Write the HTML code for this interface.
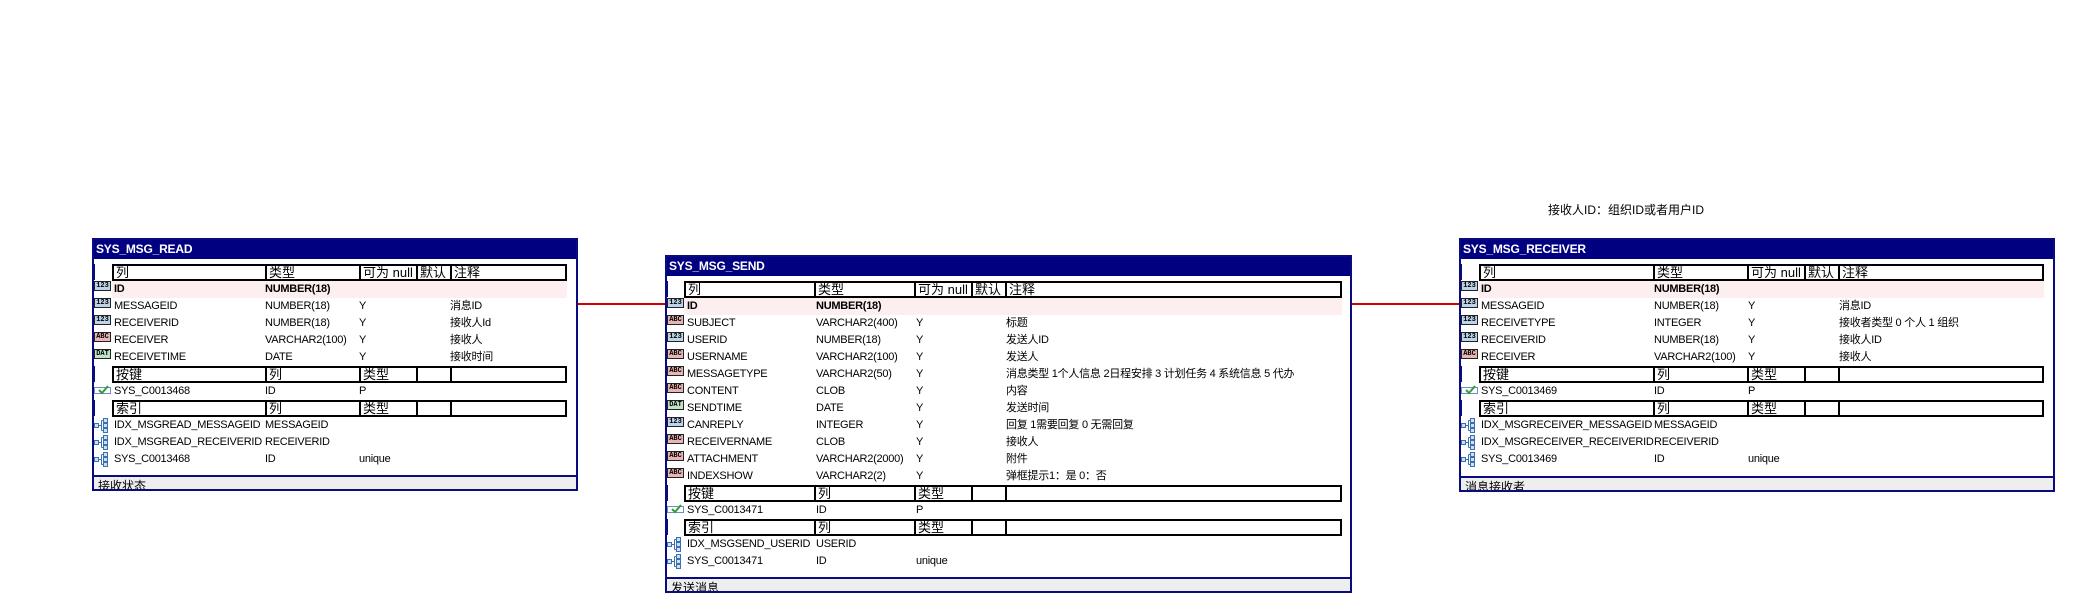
<!DOCTYPE html>
<html><head><meta charset="utf-8"><style>
body{margin:0;width:2079px;height:606px;background:#fff;position:relative;overflow:hidden;font-family:"Liberation Sans","Noto Sans CJK SC",sans-serif;color:#000}
.t{position:absolute;background:#fff}
.b{position:absolute;left:0;top:0;right:0;bottom:0;border:2px solid #0b0b80;z-index:5;pointer-events:none}
.tt{position:absolute;left:0;top:0;right:0;height:21px;background:#000080;color:#fff;font-weight:bold;font-size:12px;line-height:22px;padding-left:4px;letter-spacing:-0.2px}
.r{position:absolute;height:17px;left:0;right:0;font-size:11px;line-height:17px;letter-spacing:-0.25px}
.r span{position:absolute;top:0;white-space:nowrap}
.pk{background:#fdefef}
.pk span{font-weight:bold}
.h{position:absolute;height:17px;border:2px solid #000;box-sizing:border-box;font-size:13px;line-height:13px}
.h i{position:absolute;top:0;bottom:0;border-left:2px solid #000;font-style:normal}
.h s{position:absolute;top:0;text-decoration:none;white-space:nowrap}
.ft{position:absolute;left:0;right:0;bottom:0;height:16px;background:#eeeeee;border-top:2px solid #0b0b80;font-size:12px;line-height:18px;padding-left:6px;box-sizing:border-box;overflow:hidden}
.bar{position:absolute;left:0;width:3px;height:16px;background:#0b0b80}
.ic{position:absolute;left:2px;top:3px;width:15px;height:8px;border:1px solid #222;font-size:7px;line-height:8px;text-align:center;font-weight:bold;letter-spacing:0;font-family:"Liberation Mono",monospace}
.n{background:#bcd3ea}.a{background:#e9b4b4}.d{background:#bfe3c3}
.sv{position:absolute;left:2px;top:1px}
.red{position:absolute;height:2px;background:#d00000}
</style></head><body>

<div class="red" style="left:578px;top:303px;width:87px"></div>
<div class="red" style="left:1352px;top:303px;width:107px"></div>
<div style="position:absolute;left:1548px;top:201px;font-size:12px;white-space:nowrap">接收人ID：组织ID或者用户ID</div>

<!-- TABLE 1 -->
<div class="t" style="left:92px;top:238px;width:486px;height:253px">
<div class="b"></div>
<div class="tt">SYS_MSG_READ</div>
<div class="bar" style="top:26px"></div>
<div class="h" style="left:20px;top:26px;width:455px"><s style="left:2px">列</s><i style="left:151px"><s style="left:2px">类型</s></i><i style="left:245px"><s style="left:2px">可为 null</s></i><i style="left:302px"><s style="left:2px">默认</s></i><i style="left:336px"><s style="left:2px">注释</s></i></div>
<div class="r pk" style="top:43px;right:11px;left:20px"><span class="ic n" style="left:-18px">123</span><span style="left:2px">ID</span><span style="left:153px">NUMBER(18)</span></div>
<div class="r" style="top:60px"><span class="ic n">123</span><span style="left:22px">MESSAGEID</span><span style="left:173px">NUMBER(18)</span><span style="left:267px">Y</span><span style="left:358px">消息ID</span></div>
<div class="r" style="top:77px"><span class="ic n">123</span><span style="left:22px">RECEIVERID</span><span style="left:173px">NUMBER(18)</span><span style="left:267px">Y</span><span style="left:358px">接收人Id</span></div>
<div class="r" style="top:94px"><span class="ic a">ABC</span><span style="left:22px">RECEIVER</span><span style="left:173px">VARCHAR2(100)</span><span style="left:267px">Y</span><span style="left:358px">接收人</span></div>
<div class="r" style="top:111px"><span class="ic d">DAT</span><span style="left:22px">RECEIVETIME</span><span style="left:173px">DATE</span><span style="left:267px">Y</span><span style="left:358px">接收时间</span></div>
<div class="bar" style="top:128px"></div>
<div class="h" style="left:20px;top:128px;width:455px"><s style="left:2px">按键</s><i style="left:151px"><s style="left:2px">列</s></i><i style="left:245px"><s style="left:2px">类型</s></i><i style="left:302px"></i><i style="left:336px"></i></div>
<div class="r" style="top:145px"><svg class="sv" width="18" height="12"><rect x="0.5" y="3.5" width="16" height="6" fill="none" stroke="#6a8fc0"/><path d="M5 6l3 3 6-7" stroke="#3a9a3a" stroke-width="2" fill="none"/></svg><span style="left:22px">SYS_C0013468</span><span style="left:173px">ID</span><span style="left:267px">P</span></div>
<div class="bar" style="top:162px"></div>
<div class="h" style="left:20px;top:162px;width:455px"><s style="left:2px">索引</s><i style="left:151px"><s style="left:2px">列</s></i><i style="left:245px"><s style="left:2px">类型</s></i><i style="left:302px"></i><i style="left:336px"></i></div>
<div class="r" style="top:179px"><svg class="sv" width="16" height="16"><g fill="#cfe0f4" stroke="#3a6fb0"><rect x="0.5" y="5.5" width="4" height="4"/><rect x="9.5" y="0.5" width="4" height="4"/><rect x="9.5" y="5.5" width="4" height="4"/><rect x="9.5" y="10.5" width="4" height="4"/></g><path d="M4.5 7.5h3M7.5 2.5v10M7.5 2.5h2M7.5 12.5h2" stroke="#3a6fb0" fill="none"/></svg><span style="left:22px">IDX_MSGREAD_MESSAGEID</span><span style="left:173px">MESSAGEID</span></div>
<div class="r" style="top:196px"><svg class="sv" width="16" height="16"><g fill="#cfe0f4" stroke="#3a6fb0"><rect x="0.5" y="5.5" width="4" height="4"/><rect x="9.5" y="0.5" width="4" height="4"/><rect x="9.5" y="5.5" width="4" height="4"/><rect x="9.5" y="10.5" width="4" height="4"/></g><path d="M4.5 7.5h3M7.5 2.5v10M7.5 2.5h2M7.5 12.5h2" stroke="#3a6fb0" fill="none"/></svg><span style="left:22px">IDX_MSGREAD_RECEIVERID</span><span style="left:173px">RECEIVERID</span></div>
<div class="r" style="top:213px"><svg class="sv" width="16" height="16"><g fill="#cfe0f4" stroke="#3a6fb0"><rect x="0.5" y="5.5" width="4" height="4"/><rect x="9.5" y="0.5" width="4" height="4"/><rect x="9.5" y="5.5" width="4" height="4"/><rect x="9.5" y="10.5" width="4" height="4"/></g><path d="M4.5 7.5h3M7.5 2.5v10M7.5 2.5h2M7.5 12.5h2" stroke="#3a6fb0" fill="none"/></svg><span style="left:22px">SYS_C0013468</span><span style="left:173px">ID</span><span style="left:267px">unique</span></div>
<div class="ft">接收状态</div>
</div>

<!-- TABLE 2 -->
<div class="t" style="left:665px;top:255px;width:687px;height:338px">
<div class="b"></div>
<div class="tt">SYS_MSG_SEND</div>
<div class="bar" style="top:26px"></div>
<div class="h" style="left:19px;top:26px;width:658px"><s style="left:2px">列</s><i style="left:128px"><s style="left:2px">类型</s></i><i style="left:228px"><s style="left:2px">可为 null</s></i><i style="left:285px"><s style="left:2px">默认</s></i><i style="left:319px"><s style="left:2px">注释</s></i></div>
<div class="r pk" style="top:43px;right:10px;left:19px"><span class="ic n" style="left:-17px">123</span><span style="left:3px">ID</span><span style="left:132px">NUMBER(18)</span></div>
<div class="r" style="top:60px"><span class="ic a">ABC</span><span style="left:22px">SUBJECT</span><span style="left:151px">VARCHAR2(400)</span><span style="left:251px">Y</span><span style="left:341px">标题</span></div>
<div class="r" style="top:77px"><span class="ic n">123</span><span style="left:22px">USERID</span><span style="left:151px">NUMBER(18)</span><span style="left:251px">Y</span><span style="left:341px">发送人ID</span></div>
<div class="r" style="top:94px"><span class="ic a">ABC</span><span style="left:22px">USERNAME</span><span style="left:151px">VARCHAR2(100)</span><span style="left:251px">Y</span><span style="left:341px">发送人</span></div>
<div class="r" style="top:111px;overflow:hidden;right:10px"><span class="ic a">ABC</span><span style="left:22px">MESSAGETYPE</span><span style="left:151px">VARCHAR2(50)</span><span style="left:251px">Y</span><span style="left:341px">消息类型 1个人信息 2日程安排 3 计划任务 4 系统信息 5 代办</span></div>
<div class="r" style="top:128px"><span class="ic a">ABC</span><span style="left:22px">CONTENT</span><span style="left:151px">CLOB</span><span style="left:251px">Y</span><span style="left:341px">内容</span></div>
<div class="r" style="top:145px"><span class="ic d">DAT</span><span style="left:22px">SENDTIME</span><span style="left:151px">DATE</span><span style="left:251px">Y</span><span style="left:341px">发送时间</span></div>
<div class="r" style="top:162px"><span class="ic n">123</span><span style="left:22px">CANREPLY</span><span style="left:151px">INTEGER</span><span style="left:251px">Y</span><span style="left:341px">回复 1需要回复 0 无需回复</span></div>
<div class="r" style="top:179px"><span class="ic a">ABC</span><span style="left:22px">RECEIVERNAME</span><span style="left:151px">CLOB</span><span style="left:251px">Y</span><span style="left:341px">接收人</span></div>
<div class="r" style="top:196px"><span class="ic a">ABC</span><span style="left:22px">ATTACHMENT</span><span style="left:151px">VARCHAR2(2000)</span><span style="left:251px">Y</span><span style="left:341px">附件</span></div>
<div class="r" style="top:213px"><span class="ic a">ABC</span><span style="left:22px">INDEXSHOW</span><span style="left:151px">VARCHAR2(2)</span><span style="left:251px">Y</span><span style="left:341px">弹框提示1：是 0：否</span></div>
<div class="bar" style="top:230px"></div>
<div class="h" style="left:19px;top:230px;width:658px"><s style="left:2px">按键</s><i style="left:128px"><s style="left:2px">列</s></i><i style="left:228px"><s style="left:2px">类型</s></i><i style="left:285px"></i><i style="left:319px"></i></div>
<div class="r" style="top:247px"><svg class="sv" width="18" height="12"><rect x="0.5" y="3.5" width="16" height="6" fill="none" stroke="#6a8fc0"/><path d="M5 6l3 3 6-7" stroke="#3a9a3a" stroke-width="2" fill="none"/></svg><span style="left:22px">SYS_C0013471</span><span style="left:151px">ID</span><span style="left:251px">P</span></div>
<div class="bar" style="top:264px"></div>
<div class="h" style="left:19px;top:264px;width:658px"><s style="left:2px">索引</s><i style="left:128px"><s style="left:2px">列</s></i><i style="left:228px"><s style="left:2px">类型</s></i><i style="left:285px"></i><i style="left:319px"></i></div>
<div class="r" style="top:281px"><svg class="sv" width="16" height="16"><g fill="#cfe0f4" stroke="#3a6fb0"><rect x="0.5" y="5.5" width="4" height="4"/><rect x="9.5" y="0.5" width="4" height="4"/><rect x="9.5" y="5.5" width="4" height="4"/><rect x="9.5" y="10.5" width="4" height="4"/></g><path d="M4.5 7.5h3M7.5 2.5v10M7.5 2.5h2M7.5 12.5h2" stroke="#3a6fb0" fill="none"/></svg><span style="left:22px">IDX_MSGSEND_USERID</span><span style="left:151px">USERID</span></div>
<div class="r" style="top:298px"><svg class="sv" width="16" height="16"><g fill="#cfe0f4" stroke="#3a6fb0"><rect x="0.5" y="5.5" width="4" height="4"/><rect x="9.5" y="0.5" width="4" height="4"/><rect x="9.5" y="5.5" width="4" height="4"/><rect x="9.5" y="10.5" width="4" height="4"/></g><path d="M4.5 7.5h3M7.5 2.5v10M7.5 2.5h2M7.5 12.5h2" stroke="#3a6fb0" fill="none"/></svg><span style="left:22px">SYS_C0013471</span><span style="left:151px">ID</span><span style="left:251px">unique</span></div>
<div class="ft">发送消息</div>
</div>

<!-- TABLE 3 -->
<div class="t" style="left:1459px;top:238px;width:596px;height:254px">
<div class="b"></div>
<div class="tt">SYS_MSG_RECEIVER</div>
<div class="bar" style="top:26px"></div>
<div class="h" style="left:20px;top:26px;width:565px"><s style="left:2px">列</s><i style="left:172px"><s style="left:2px">类型</s></i><i style="left:266px"><s style="left:2px">可为 null</s></i><i style="left:323px"><s style="left:2px">默认</s></i><i style="left:357px"><s style="left:2px">注释</s></i></div>
<div class="r pk" style="top:43px;right:11px;left:20px"><span class="ic n" style="left:-18px">123</span><span style="left:2px">ID</span><span style="left:175px">NUMBER(18)</span></div>
<div class="r" style="top:60px"><span class="ic n">123</span><span style="left:22px">MESSAGEID</span><span style="left:195px">NUMBER(18)</span><span style="left:289px">Y</span><span style="left:380px">消息ID</span></div>
<div class="r" style="top:77px"><span class="ic n">123</span><span style="left:22px">RECEIVETYPE</span><span style="left:195px">INTEGER</span><span style="left:289px">Y</span><span style="left:380px">接收者类型 0 个人 1 组织</span></div>
<div class="r" style="top:94px"><span class="ic n">123</span><span style="left:22px">RECEIVERID</span><span style="left:195px">NUMBER(18)</span><span style="left:289px">Y</span><span style="left:380px">接收人ID</span></div>
<div class="r" style="top:111px"><span class="ic a">ABC</span><span style="left:22px">RECEIVER</span><span style="left:195px">VARCHAR2(100)</span><span style="left:289px">Y</span><span style="left:380px">接收人</span></div>
<div class="bar" style="top:128px"></div>
<div class="h" style="left:20px;top:128px;width:565px"><s style="left:2px">按键</s><i style="left:172px"><s style="left:2px">列</s></i><i style="left:266px"><s style="left:2px">类型</s></i><i style="left:323px"></i><i style="left:357px"></i></div>
<div class="r" style="top:145px"><svg class="sv" width="18" height="12"><rect x="0.5" y="3.5" width="16" height="6" fill="none" stroke="#6a8fc0"/><path d="M5 6l3 3 6-7" stroke="#3a9a3a" stroke-width="2" fill="none"/></svg><span style="left:22px">SYS_C0013469</span><span style="left:195px">ID</span><span style="left:289px">P</span></div>
<div class="bar" style="top:162px"></div>
<div class="h" style="left:20px;top:162px;width:565px"><s style="left:2px">索引</s><i style="left:172px"><s style="left:2px">列</s></i><i style="left:266px"><s style="left:2px">类型</s></i><i style="left:323px"></i><i style="left:357px"></i></div>
<div class="r" style="top:179px"><svg class="sv" width="16" height="16"><g fill="#cfe0f4" stroke="#3a6fb0"><rect x="0.5" y="5.5" width="4" height="4"/><rect x="9.5" y="0.5" width="4" height="4"/><rect x="9.5" y="5.5" width="4" height="4"/><rect x="9.5" y="10.5" width="4" height="4"/></g><path d="M4.5 7.5h3M7.5 2.5v10M7.5 2.5h2M7.5 12.5h2" stroke="#3a6fb0" fill="none"/></svg><span style="left:22px">IDX_MSGRECEIVER_MESSAGEID</span><span style="left:195px">MESSAGEID</span></div>
<div class="r" style="top:196px"><svg class="sv" width="16" height="16"><g fill="#cfe0f4" stroke="#3a6fb0"><rect x="0.5" y="5.5" width="4" height="4"/><rect x="9.5" y="0.5" width="4" height="4"/><rect x="9.5" y="5.5" width="4" height="4"/><rect x="9.5" y="10.5" width="4" height="4"/></g><path d="M4.5 7.5h3M7.5 2.5v10M7.5 2.5h2M7.5 12.5h2" stroke="#3a6fb0" fill="none"/></svg><span style="left:22px">IDX_MSGRECEIVER_RECEIVERID</span><span style="left:195px">RECEIVERID</span></div>
<div class="r" style="top:213px"><svg class="sv" width="16" height="16"><g fill="#cfe0f4" stroke="#3a6fb0"><rect x="0.5" y="5.5" width="4" height="4"/><rect x="9.5" y="0.5" width="4" height="4"/><rect x="9.5" y="5.5" width="4" height="4"/><rect x="9.5" y="10.5" width="4" height="4"/></g><path d="M4.5 7.5h3M7.5 2.5v10M7.5 2.5h2M7.5 12.5h2" stroke="#3a6fb0" fill="none"/></svg><span style="left:22px">SYS_C0013469</span><span style="left:195px">ID</span><span style="left:289px">unique</span></div>
<div class="ft">消息接收者</div>
</div>

</body></html>
